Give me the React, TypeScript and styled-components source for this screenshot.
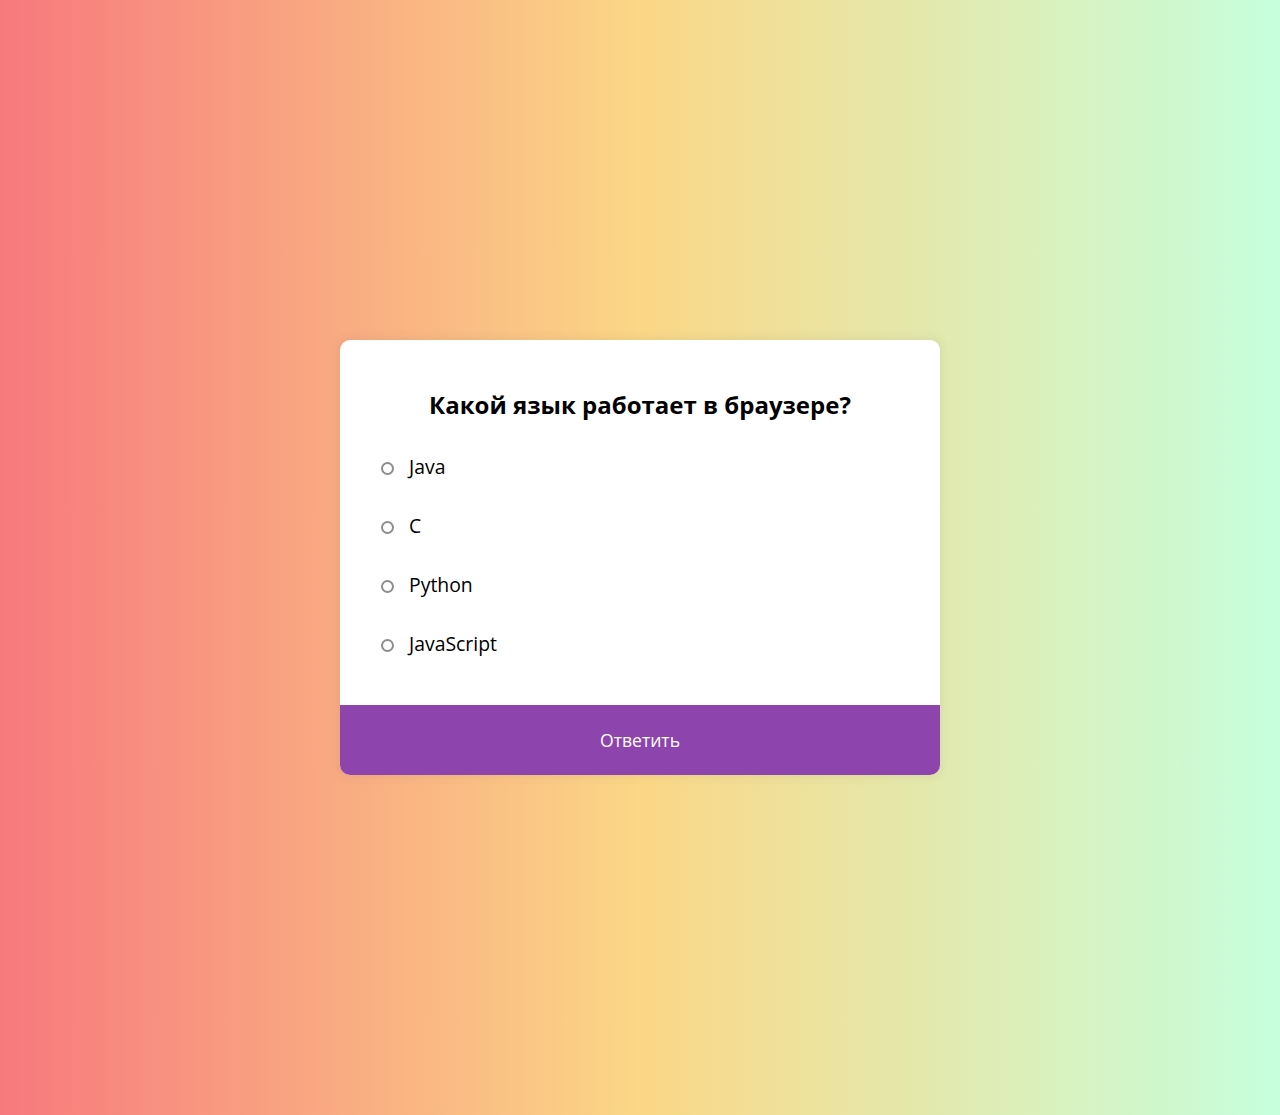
import React from "react";
import styled, { createGlobalStyle } from "styled-components";

const GlobalStyle = createGlobalStyle`
  * { box-sizing: border-box; }
  html, body { margin: 0; padding: 0; }
  body {
    font-family: "Open Sans", "Noto Sans", sans-serif;
    background-image: linear-gradient(to right, #f7797d, #fbd786, #c6ffdd);
    min-height: 100vh;
  }
`;

const Page = styled.div`
  display: flex;
  align-items: center;
  justify-content: center;
  height: 1115px;
`;

const Card = styled.div`
  width: 600px;
  background: #fff;
  border-radius: 10px;
  box-shadow: 0 0 10px 2px rgba(100, 100, 100, 0.1);
  overflow: hidden;
`;

const Header = styled.div`
  padding: 32px 32px 32px;
`;

const Title = styled.h2`
  margin: 0;
  padding: 16px;
  text-align: center;
  font-size: 24px;
  font-weight: 700;
  color: #000;
`;

const List = styled.ul`
  list-style: none;
  margin: 16px 0;
  padding: 0;
  display: flex;
  flex-direction: column;
  gap: 32px;
`;

const Item = styled.li`
  font-size: 19.4px;
  line-height: 27.2px;
  margin: 0;
  color: #000;
`;

const Label = styled.label`
  display: flex;
  align-items: center;
  cursor: pointer;
`;

const Radio = styled.input`
  appearance: none;
  -webkit-appearance: none;
  margin: 4px 15px 0 9px;
  width: 13px;
  height: 13px;
  flex: none;
  border: 2px solid #8d8d8d;
  border-radius: 50%;
  background: #fff;
`;

const Submit = styled.button`
  display: block;
  width: 100%;
  border: none;
  background: #8e44ad;
  color: #fff;
  font-family: inherit;
  font-size: 17.6px;
  line-height: 26px;
  padding: 22px;
  cursor: pointer;
`;

const options = ["Java", "C", "Python", "JavaScript"];

export default function App() {
  return (
    <>
      <GlobalStyle />
      <Page>
        <Card>
          <Header>
            <Title>Какой язык работает в браузере?</Title>
            <List>
              {options.map((o) => (
                <Item key={o}>
                  <Label>
                    <Radio type="radio" name="answer" />
                    <span>{o}</span>
                  </Label>
                </Item>
              ))}
            </List>
          </Header>
          <Submit>Ответить</Submit>
        </Card>
      </Page>
    </>
  );
}
